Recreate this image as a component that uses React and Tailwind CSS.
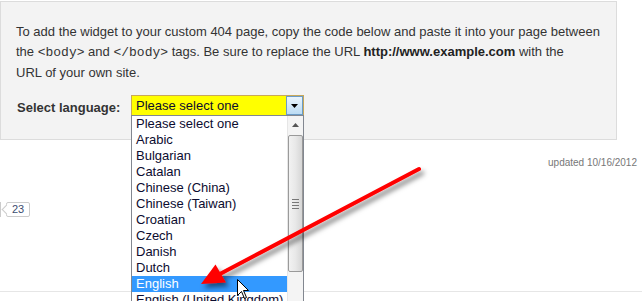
import React from "react";

// dropdown options shown in the open list
const LANGS = [
  "Please select one",
  "Arabic",
  "Bulgarian",
  "Catalan",
  "Chinese (China)",
  "Chinese (Taiwan)",
  "Croatian",
  "Czech",
  "Danish",
  "Dutch",
  "English",
  "English (United Kingdom)",
];

function Code({ children }) {
  return <span className="font-['Liberation_Mono',monospace] text-[13px]">{children}</span>;
}

function DropList() {
  return (
    <div className="absolute left-0 top-[20px] w-[173px] h-[200px] bg-white border border-[#828790] overflow-hidden flex">
      <ul className="flex-1 text-[13px] leading-[16px] text-[#0c0c30]">
        {LANGS.map((l) => (
          <li
            key={l}
            className={
              "h-[16px] pl-[4px] whitespace-nowrap " +
              (l === "English" ? "bg-[#3399ff] text-white" : "")
            }
          >
            {l}
          </li>
        ))}
      </ul>
      {/* scrollbar */}
      <div className="w-[16px] bg-[#f4f4f4] border-l border-[#e6e6e6] flex flex-col items-center">
        <div className="h-[18px] w-full flex items-center justify-center">
          <svg width="7" height="4" viewBox="0 0 7 4">
            <path d="M0 4 L3.5 0 L7 4 Z" fill="#555" />
          </svg>
        </div>
        <div className="mt-[1px] w-[15px] h-[137px] rounded-[2px] border border-[#9a9a9a] bg-gradient-to-r from-[#f2f2f2] via-[#e8e8e8] to-[#d6d6d6] flex flex-col items-center justify-center gap-[2px]">
          <div className="w-[7px] h-px bg-[#777]" />
          <div className="w-[7px] h-px bg-[#777]" />
          <div className="w-[7px] h-px bg-[#777]" />
          <div className="w-[7px] h-px bg-[#777]" />
        </div>
      </div>
    </div>
  );
}

export default function App() {
  return (
    <div className="relative w-[642px] h-[301px] overflow-hidden bg-white font-['Liberation_Sans',Arial,sans-serif]">
      {/* instruction panel */}
      <div className="mt-px w-[617px] h-[139px] border border-[#dcdcdc] bg-[#f3f3f3] pl-[15px] pt-[20px] text-[13px] text-[#333]">
        <p className="leading-[20px] whitespace-nowrap">
          To add the widget to your custom 404 page, copy the code below and paste it into your page between
          <br />
          the <Code>&lt;body&gt;</Code> and <Code>&lt;/body&gt;</Code> tags. Be sure to replace the URL{" "}
          <b className="text-[#222]">http://www.example.com</b> with the
          <br />
          URL of your own site.
        </p>

        <div className="mt-[11px] flex items-center">
          <span className="w-[115px] pt-[4px] font-bold pl-px">Select language:</span>
          <div className="relative w-[173px] h-[21px]">
            <div className="h-full border border-[#c8a85a] bg-[#ffff00] flex items-center">
              <span className="flex-1 pl-[4px] text-[13px] text-[#0c0c30]">Please select one</span>
              <div className="w-[17px] h-[19px] border border-[#6c9cc6] bg-gradient-to-b from-[#eaf4fc] to-[#bcdcf4] flex items-center justify-center">
                <svg width="7" height="4" viewBox="0 0 7 4">
                  <path d="M0 0 L7 0 L3.5 4 Z" fill="#000" />
                </svg>
              </div>
            </div>
            <DropList />
          </div>
        </div>
      </div>

      {/* meta row */}
      <div className="mt-[17px] flex justify-end pr-[5px] text-[10px] leading-[12px] text-[#777]">
        updated 10/16/2012
      </div>

      {/* +1 count bubble */}
      <div className="mt-[33px] flex items-center h-[15px]">
        <div className="w-px h-[15px] bg-[#ccc]" />
        <div className="relative ml-[5px] h-[15px] px-[5px] border border-[#ccc] rounded-[2px] bg-white text-[11px] leading-[13px] text-[#3b4d70]">
          23
          <span className="absolute -left-[4px] top-[3px] w-[7px] h-[7px] rotate-45 border-l border-b border-[#ccc] bg-white" />
        </div>
      </div>

      {/* footer rule */}
      <div className="mt-[74px] border-t border-[#e6e6e6]" />

      {/* callout arrow */}
      <svg className="absolute left-0 top-0 pointer-events-none" width="642" height="301">
        <defs>
          <filter id="sh" x="-20%" y="-20%" width="140%" height="160%">
            <feDropShadow dx="3" dy="4" stdDeviation="2.5" floodColor="#000" floodOpacity="0.5" />
          </filter>
        </defs>
        <g filter="url(#sh)">
          <line x1="419" y1="169" x2="218" y2="275" stroke="#ff0000" strokeWidth="4" strokeLinecap="round" />
          <polygon points="201,284 215.5,264.5 226,282.5" fill="#ff0000" />
        </g>
      </svg>

      {/* mouse pointer */}
      <svg className="absolute left-[237px] top-[279px]" width="13" height="20" viewBox="0 0 13 20">
        <path d="M0.5 0.5 L0.5 16.5 L4.5 12.5 L7.5 19.5 L9.5 18.5 L6.5 11.5 L11.5 11.5 Z" fill="#fff" stroke="#000" strokeWidth="1" strokeLinejoin="round" />
      </svg>
    </div>
  );
}
